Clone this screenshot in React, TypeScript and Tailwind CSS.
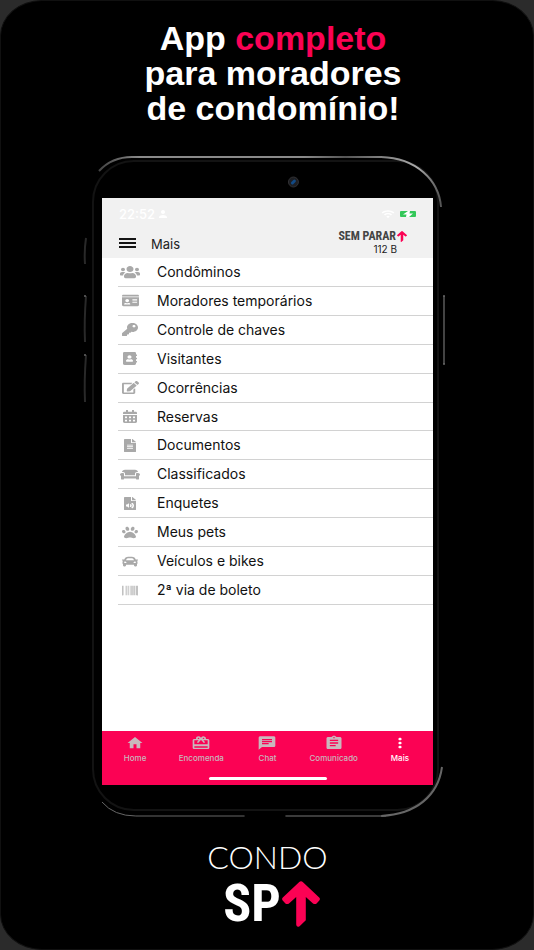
import React from 'react';
import type { IconType } from 'react-icons';
import {
  FaAddressBook,
  FaBarcode,
  FaCalendarAlt,
  FaCar,
  FaCouch,
  FaEdit,
  FaFileAlt,
  FaFileAudio,
  FaIdCard,
  FaKey,
  FaPaw,
  FaUsers,
} from 'react-icons/fa';
import {
  MdAssignment,
  MdChat,
  MdHome,
  MdMoreVert,
  MdPerson,
  MdRedeem,
  MdWifi,
} from 'react-icons/md';

interface Item {
  label: string;
  icon: IconType;
  size: string;
}

const menuItems: Item[] = [
  { label: 'Condôminos', icon: FaUsers, size: 'w-5 h-[14px]' },
  { label: 'Moradores temporários', icon: FaIdCard, size: 'w-[17px] h-[13px]' },
  { label: 'Controle de chaves', icon: FaKey, size: 'w-4 h-[13px]' },
  { label: 'Visitantes', icon: FaAddressBook, size: 'w-[14px] h-[13px]' },
  { label: 'Ocorrências', icon: FaEdit, size: 'w-[17px] h-[13px]' },
  { label: 'Reservas', icon: FaCalendarAlt, size: 'w-[14px] h-[13px]' },
  { label: 'Documentos', icon: FaFileAlt, size: 'w-3 h-[13px]' },
  { label: 'Classificados', icon: FaCouch, size: 'w-5 h-[13px]' },
  { label: 'Enquetes', icon: FaFileAudio, size: 'w-3 h-[13px]' },
  { label: 'Meus pets', icon: FaPaw, size: 'w-4 h-[13px]' },
  { label: 'Veículos e bikes', icon: FaCar, size: 'w-4 h-[13px]' },
  { label: '2ª via de boleto', icon: FaBarcode, size: 'w-4 h-[13px]' },
];

const tabs: Item[] = [
  { label: 'Home', icon: MdHome, size: 'w-[18px] h-4' },
  { label: 'Encomenda', icon: MdRedeem, size: 'w-5 h-4' },
  { label: 'Chat', icon: MdChat, size: 'w-5 h-4' },
  { label: 'Comunicado', icon: MdAssignment, size: 'w-5 h-4' },
  { label: 'Mais', icon: MdMoreVert, size: 'w-5 h-4' },
];

const ArrowUp: React.FC<{ className: string }> = ({ className }) => (
  <svg className={className} viewBox="0 0 38 46" preserveAspectRatio="none" fill="#fb0254" aria-hidden="true">
    <path d="M17 1.2Q19 -.5 21 1.2L37.2 16.4Q38.6 18 37.3 19.6L34.6 22.4Q32.8 23.8 31 22.4L23.8 16V39.2L17.6 45.2Q14.4 46.8 14.2 43.6V16L7 22.4Q5.2 23.8 3.4 22.4L.7 19.6Q-.6 18 .8 16.4Z" />
  </svg>
);

// Metal edge, side keys and camera of the handset
const PhoneShell: React.FC = () => (
  <svg
    className="absolute inset-0 h-full w-full overflow-visible"
    viewBox="0 0 352 661"
    preserveAspectRatio="none"
    fill="none"
    aria-hidden="true"
  >
    <defs>
      <linearGradient id="corner" x1="0" y1="0" x2="1" y2="0">
        <stop offset="0" stopColor="#444" />
        <stop offset="0.12" stopColor="#8a8a8a" />
        <stop offset="0.6" stopColor="#8a8a8a" />
        <stop offset="0.72" stopColor="#555" />
        <stop offset="0.93" stopColor="#aaa" />
        <stop offset="1" stopColor="#555" />
      </linearGradient>
    </defs>
    <rect x="1" y="5" width="346" height="649" rx="41" stroke="#131313" strokeWidth="2" />
    <path d="M7 15Q20 1 40 1H290C325 2 348 24 350 51" stroke="url(#corner)" strokeWidth="2" />
    <path d="M10 646Q22 660 44 660H153" stroke="#666" strokeWidth="1" />
    <path d="M194 660H295" stroke="#777" strokeWidth="1" />
    <path d="M290 660C325 658 347 640 351 611" stroke="#666" strokeWidth="2" />
    <g stroke="#292929" strokeWidth="2">
      <path d="M-6 82Q-8 95 -7 108" />
      <path d="M-6 140Q-8 165 -7 186" />
      <path d="M-6 199Q-8 225 -7 246" />
      <path d="M353 140V208" stroke="#444" />
    </g>
    <g fill="#666">
      <circle cx="-7" cy="140" r="1" />
      <circle cx="-7" cy="199" r="1" />
      <circle cx="353" cy="140" r="1" />
      <circle cx="353" cy="208" r="1" />
    </g>
    <circle cx="202" cy="26" r="5" fill="#1d1e22" stroke="#303033" />
    <path d="M201 27L203 25" stroke="#124a85" strokeWidth="3" strokeLinecap="round" />
  </svg>
);

const StatusBar: React.FC = () => (
  <div className="flex h-8 items-center justify-between px-[17px] text-white">
    <div className="flex items-center gap-[2px]">
      <span className="text-[13px] leading-4 font-medium">22:52</span>
      <MdPerson className="h-3 w-3" />
    </div>
    <div className="flex items-center gap-[5px]">
      <MdWifi className="h-3 w-[14px]" preserveAspectRatio="none" />
      <svg className="h-[6px] w-4" viewBox="0 0 16 6" aria-hidden="true">
        <rect width="16" height="6" rx="1" fill="#34c759" />
        <path d="M8 0L3 3.5H6.5L6 6H9L13 2.6H9.5L10 0Z" fill="#fff" />
      </svg>
    </div>
  </div>
);

const TopBar: React.FC = () => (
  <header className="h-[60px] bg-[#f1f1f1]">
    <StatusBar />
    <div className="flex items-start justify-between pr-[26px] pl-[17px]">
      <div className="flex items-start gap-[15px] pt-[6px]">
        <button type="button" aria-label="Menu" className="flex w-[17px] flex-col gap-[2px] pt-[2px]">
          <span className="h-[2px] w-full bg-[#151515]" />
          <span className="h-[2px] w-full bg-[#151515]" />
          <span className="h-[2px] w-full bg-[#151515]" />
        </button>
        <span className="text-[13px] leading-4 text-[#222]">Mais</span>
      </div>
      <div className="flex flex-col items-end">
        <div className="flex items-center gap-px">
          <span className="font-['Roboto_Condensed','Liberation_Sans_Narrow','Liberation_Sans',sans-serif] text-[12px] leading-3 font-bold text-[#444]">
            SEM PARAR
          </span>
          <ArrowUp className="h-[11px] w-[10px]" />
        </div>
        <span className="mt-px mr-[10px] text-[10px] leading-3 text-[#222]">112 B</span>
      </div>
    </div>
  </header>
);

const MenuList: React.FC = () => (
  <ul className="grid h-[347px] auto-rows-fr pl-4">
    {menuItems.map(({ label, icon: Icon, size }) => (
      <li key={label} className="border-b border-[#d2d2d2]">
        <a href="#" className="flex h-full items-center gap-[15px] text-[14px] leading-5 text-[#111]">
          <span className="flex w-6 justify-center text-[#a9a9a9]">
            <Icon className={size} preserveAspectRatio="none" />
          </span>
          {label}
        </a>
      </li>
    ))}
  </ul>
);

const TabBar: React.FC = () => (
  <nav className="h-[54px] bg-[#fb0254]">
    <div className="grid grid-cols-5 pt-1">
      {tabs.map(({ label, icon: Icon, size }) => (
        <button
          key={label}
          type="button"
          className={`flex flex-col items-center gap-[2px] ${label === 'Mais' ? 'text-white' : 'text-[#c9b8bd]'}`}
        >
          <Icon className={size} preserveAspectRatio="none" />
          <span className="text-[8px] leading-[10px] font-medium">{label}</span>
        </button>
      ))}
    </div>
    <div className="mx-auto mt-[14px] h-[3px] w-[118px] rounded-full bg-white" />
  </nav>
);

const App: React.FC = () => {
  return (
    <div className="min-h-screen bg-[#2b2b2b]">
      <main className="min-h-screen rounded-[42px/36px] border border-[#101010] bg-black pt-5 pr-[90px] pl-[91px] font-['Inter','Liberation_Sans',sans-serif]">
        <h1 className="pl-[11px] text-center font-['Liberation_Sans',Arial,sans-serif] text-[34px] leading-[35px] font-bold whitespace-nowrap text-white">
          App <span className="text-[#fb0254]">completo</span>
          <br />
          para moradores
          <br />
          de condomínio!
        </h1>

        <section className="relative mt-[30px] px-[10px] pt-[42px] pb-8">
          <PhoneShell />
          <div className="relative flex flex-col bg-white">
            <TopBar />
            <MenuList />
            <div className="h-[126px]" />
            <TabBar />
          </div>
        </section>

        <footer className="mt-5 flex flex-col items-center">
          <span className="font-['Lato',sans-serif] text-[32px] leading-10 font-light text-white">CONDO</span>
          <div className="mt-[3px] flex items-center gap-px pl-2">
            <span className="font-['Roboto_Condensed','Liberation_Sans_Narrow','Liberation_Sans',sans-serif] text-[52px] leading-[48px] font-bold text-white">
              SP
            </span>
            <ArrowUp className="h-[46px] w-[38px]" />
          </div>
        </footer>
      </main>
    </div>
  );
};

export default App;
